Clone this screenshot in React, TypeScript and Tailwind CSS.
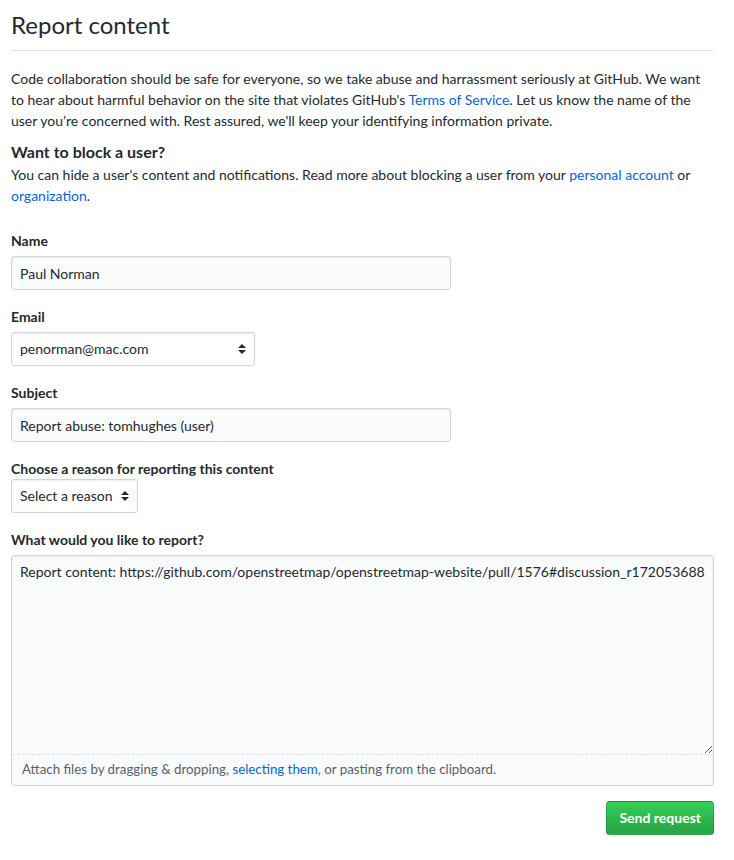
import React from 'react';

const font = { fontFamily: 'Lato, "Liberation Sans", sans-serif' };

function SelectArrows() {
  return (
    <svg width="8" height="10" viewBox="0 0 8 10" className="shrink-0 fill-[#24292e]">
      <path d="M4 0 L8 4 L0 4 Z" />
      <path d="M0 6 L8 6 L4 10 Z" />
    </svg>
  );
}

function Label({ children, className = '' }: { children: React.ReactNode; className?: string }) {
  return <label className={`block text-sm font-bold leading-[21px] text-[#24292e] ${className}`}>{children}</label>;
}

export default function App() {
  return (
    <div className="min-h-[860px] bg-white pl-[11px] pr-[20px] pt-[10px] text-[#24292e]" style={font}>
      <h1 className="border-b border-[#e1e4e8] pb-[10px] text-[24px] font-normal leading-[30px]">Report content</h1>

      <p className="mt-[17px] text-sm leading-[21px]">
        Code collaboration should be safe for everyone, so we take abuse and harrassment seriously at GitHub. We want
        <br />
        to hear about harmful behavior on the site that violates GitHub's{' '}
        <a className="text-[#0366d6]" href="#">Terms of Service</a>. Let us know the name of the
        <br />
        user you’re concerned with. Rest assured, we'll keep your identifying information private.
      </p>

      <h3 className="mt-[9px] text-base font-bold leading-[24px]">Want to block a user?</h3>
      <p className="text-sm leading-[21px]">
        You can hide a user's content and notifications. Read more about blocking a user from your{' '}
        <a className="text-[#0366d6]" href="#">personal account</a> or
        <br />
        <a className="text-[#0366d6]" href="#">organization</a>.
      </p>

      <form className="mt-[24px] flex flex-col">
        <Label>Name</Label>
        <input
          readOnly
          defaultValue="Paul Norman"
          className="mt-[5px] h-[34px] w-[440px] rounded-[3px] border border-[#d1d5da] bg-[#fafbfc] px-2 text-sm text-[#24292e] shadow-[inset_0_1px_2px_rgba(27,31,35,0.075)] outline-none"
          style={font}
        />

        <Label className="mt-[16px]">Email</Label>
        <div className="mt-[5px] flex h-[34px] w-[244px] items-center justify-between rounded-[3px] border border-[#d1d5da] bg-white pl-2 pr-[8px] text-sm shadow-[inset_0_1px_2px_rgba(27,31,35,0.075)]">
          <span>penorman@mac.com</span>
          <SelectArrows />
        </div>

        <Label className="mt-[16px]">Subject</Label>
        <input
          readOnly
          defaultValue="Report abuse: tomhughes (user)"
          className="mt-[5px] h-[34px] w-[440px] rounded-[3px] border border-[#d1d5da] bg-[#fafbfc] px-2 text-sm text-[#24292e] shadow-[inset_0_1px_2px_rgba(27,31,35,0.075)] outline-none"
          style={font}
        />

        <Label className="mt-[16px]">Choose a reason for reporting this content</Label>
        <div className="flex h-[34px] w-[127px] items-center justify-between rounded-[3px] border border-[#d1d5da] bg-white pl-2 pr-[8px] text-sm shadow-[inset_0_1px_2px_rgba(27,31,35,0.075)]">
          <span>Select a reason</span>
          <SelectArrows />
        </div>

        <Label className="mt-[16px]">What would you like to report?</Label>
        <div className="mt-[5px] flex w-[703px] flex-col overflow-hidden rounded-[3px] border border-[#d1d5da] bg-[#fafbfc] shadow-[inset_0_1px_2px_rgba(27,31,35,0.075)]">
          <textarea
            readOnly
            defaultValue="Report content: https://github.com/openstreetmap/openstreetmap-website/pull/1576#discussion_r172053688"
            className="h-[198px] w-full resize-y bg-transparent px-2 pt-[5px] text-sm leading-[21px] text-[#24292e] outline-none"
            style={font}
          />
          <div className="flex h-[31px] items-center border-t border-dashed border-[#dfe2e5] px-[10px] text-[13.3px] text-[#586069]">
            <span>
              Attach files by dragging &amp; dropping, <a className="text-[#0366d6]" href="#">selecting them</a>, or
              pasting from the clipboard.
            </span>
          </div>
        </div>

        <div className="mt-[15px] flex w-[703px] justify-end">
          <button
            type="button"
            className="h-[34px] rounded-[4px] border border-[rgba(27,31,35,0.2)] bg-linear-to-b from-[#34d058] to-[#28a745] to-90% px-[12px] text-sm font-bold text-white"
            style={font}
          >
            Send request
          </button>
        </div>
      </form>
    </div>
  );
}
